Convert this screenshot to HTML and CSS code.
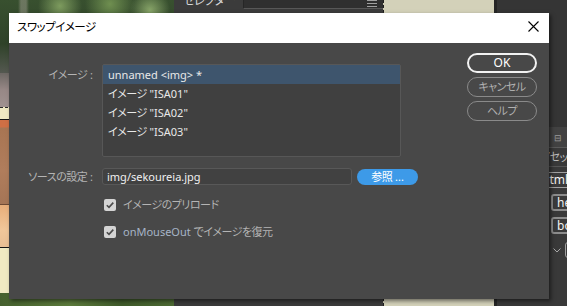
FILE: index.html
```html
<!DOCTYPE html>
<html lang="ja">
<head>
<meta charset="utf-8">
<title>スワップイメージ</title>
<link rel="stylesheet" href="styles.css">
</head>
<body>
<div class="desktop">
  <div class="preview">
    <div class="band foliage"></div>
    <div class="band haze"></div>
    <div class="band cream-top"></div>
    <div class="band rust"></div>
    <div class="band peach"></div>
    <div class="band cream-bottom"></div>
    <div class="band grass"></div>
  </div>
  <div class="mid">
    <div class="mid-head">
      <div class="mid-title ja">セレクター</div>
      <div class="mid-search">
        <svg class="menu-icon" width="10" height="7" viewBox="0 0 10 7"><path d="M0 0.5H10M0 3.5H10M0 6.5H10" stroke="#a0a0a0" stroke-width="1"/></svg>
      </div>
    </div>
  </div>
  <div class="canvas"></div>
  <div class="split"></div>
  <div class="side">
    <div class="side-top"></div>
    <div class="side-bar"><span class="side-glyph">⊟</span></div>
    <div class="side-tabs"><span class="ja">アセット</span></div>
    <div class="tree">
      <div class="tag tag-root">html</div>
      <div class="tag tag-child">head</div>
      <div class="tag tag-child">body</div>
      <div class="tree-row">
        <svg width="8" height="5" viewBox="0 0 8 5"><path d="M0.5 0.5L4 4L7.5 0.5" fill="none" stroke="#a8a8a8" stroke-width="1"/></svg>
        <span class="tag tag-mini">div</span>
      </div>
    </div>
  </div>
</div>

<div class="dialog">
  <div class="titlebar">
    <span class="title ja">スワップイメージ</span>
    <svg class="close" width="11" height="11" viewBox="0 0 11 11"><path d="M0.5 0.5L10.5 10.5M10.5 0.5L0.5 10.5" stroke="#000" stroke-width="1.1"/></svg>
  </div>
  <div class="dialog-body">
    <div class="form">
      <div class="field-row">
        <div class="label label-list"><span class="ja">イメージ</span> :</div>
        <div class="list">
          <div class="list-item selected">unnamed &lt;img&gt; *</div>
          <div class="list-item"><span class="ja">イメージ</span> "ISA01"</div>
          <div class="list-item"><span class="ja">イメージ</span> "ISA02"</div>
          <div class="list-item"><span class="ja">イメージ</span> "ISA03"</div>
        </div>
      </div>
      <div class="field-row source-row">
        <div class="label"><span class="ja">ソースの設定</span> :</div>
        <div class="input">img/sekoureia.jpg</div>
        <div class="browse"><span class="ja">参照</span> ...</div>
      </div>
      <div class="check-row first">
        <span class="checkbox"><svg width="12" height="12" viewBox="0 0 12 12"><path d="M2.8 6.2L5 8.4L9.3 3.6" fill="none" stroke="#4a4a4a" stroke-width="1.6"/></svg></span>
        <span class="check-label ja">イメージのプリロード</span>
      </div>
      <div class="check-row second">
        <span class="checkbox"><svg width="12" height="12" viewBox="0 0 12 12"><path d="M2.8 6.2L5 8.4L9.3 3.6" fill="none" stroke="#4a4a4a" stroke-width="1.6"/></svg></span>
        <span class="check-label"><span class="event">onMouseOut</span> <span class="ja">でイメージを復元</span></span>
      </div>
    </div>
    <div class="buttons">
      <div class="btn primary">OK</div>
      <div class="btn"><span class="ja">キャンセル</span></div>
      <div class="btn"><span class="ja">ヘルプ</span></div>
    </div>
  </div>
</div>
</body>
</html>
```
FILE: styles.css
```css
* { box-sizing: border-box; }
html, body { margin: 0; padding: 0; }
body {
  width: 567px;
  height: 306px;
  overflow: hidden;
  position: relative;
  background: #3a3a3a;
  font-family: "Noto Sans", "Noto Sans CJK JP", sans-serif;
  font-feature-settings: "palt";
  font-size: 11px;
}
.ja { letter-spacing: -0.5px; }

/* background application */
.desktop { display: flex; height: 306px; }
.preview { flex: none; width: 174px; display: flex; flex-direction: column; }
.band { flex: none; }
.foliage {
  height: 73px;
  background:
    linear-gradient(90deg, transparent 18px, rgba(150,150,135,0.55) 21px, rgba(150,150,135,0.55) 26px, transparent 29px),
    radial-gradient(circle at 60px 6px, #7d9b5e 0, transparent 22px),
    radial-gradient(circle at 110px 4px, #6f8f50 0, transparent 25px),
    radial-gradient(circle at 150px 10px, #87a468 0, transparent 20px),
    linear-gradient(#38502f, #2f4229 60%, #545850);
}
.haze { height: 34px; background: linear-gradient(#6d6864, #978886 50%, #a09290); }
.cream-top { height: 13px; background: #efe9c2; border-top: 1px dashed #2a2a2a; border-bottom: 1px solid #151515; }
.rust { height: 85px; background: linear-gradient(#cf6f45 0, #cf6f45 7px, #a87553 8px, #b07d5c 60%, #a57556); border-bottom: 1px solid #6e4a35; }
.peach { height: 43px; background: linear-gradient(#e8ae7a, #f1c79a 60%, #e9bf94); border-bottom: 1px solid #151515; }
.cream-bottom { height: 45px; background: #f0eac2; }
.grass { flex: 1; background: linear-gradient(90deg, #45602e, #5c7a3c 40%, #3f5a2a 70%, #4d6a34); }

.mid { flex: none; width: 209px; background: #3b3b3b; }
.mid-head { display: flex; height: 9px; }
.mid-title {
  width: 69px;
  padding-left: 9px;
  color: #d6d6d6;
  font-size: 12px;
  line-height: 14px;
  margin-top: -6px;
  white-space: nowrap;
  overflow: hidden;
}
.mid-search {
  flex: 1;
  background: #2f2f2f;
  border-left: 1px solid #262626;
  border-bottom: 1px solid #575757;
  display: flex;
  justify-content: flex-end;
  padding-right: 6px;
}
.menu-icon { display: block; }

.canvas { flex: none; width: 111px; background: #d3d1b9; border-left: 1px dashed #1e1e1e; }
.split { flex: none; width: 3px; background: #262626; }
.side { flex: 1; min-width: 0; overflow: hidden; background: #393939; display: flex; flex-direction: column; }
.side-top { flex: none; height: 127px; background: #353535; }
.side-bar { flex: none; height: 21px; background: #424242; border-bottom: 1px solid #5a5a5a; padding-left: 57px; color: #9a9a9a; font-size: 9px; line-height: 21px; }
.side-tabs { flex: none; height: 19px; border-bottom: 1px solid #555; padding-left: 43px; color: #bdbdbd; font-size: 11px; line-height: 17px; white-space: nowrap; overflow: hidden; }
.tree { display: flex; flex-direction: column; align-items: flex-start; padding-top: 5px; gap: 6px; }
.tag {
  flex: none;
  border: 1px solid #a0a0a0;
  border-radius: 3px;
  color: #f2f2f2;
  font-size: 12px;
  line-height: 14px;
  padding: 0 4px;
  background: #3a3a3a;
  white-space: nowrap;
}
.tag-root { margin-left: 40px; }
.tag-child { margin-left: 54px; border-width: 2px; border-color: #8c8c8c; line-height: 13px; }
.tree-row { display: flex; align-items: center; gap: 4px; margin-left: 56px; margin-top: 2px; }
.tag-mini { height: 16px; }

/* dialog */
.dialog {
  position: absolute;
  left: 9px;
  top: 13px;
  width: 540px;
  height: 286px;
  box-shadow: 2px 2px 4px rgba(0,0,0,0.5);
  display: flex;
  flex-direction: column;
}
.titlebar {
  flex: none;
  height: 30px;
  background: #ffffff;
  display: flex;
  align-items: center;
  justify-content: space-between;
  padding: 0 10px 0 8px;
}
.title { color: #000; font-size: 11.5px; line-height: 14px; margin-top: -3px; }
.close { display: block; margin-top: -4px; }

.dialog-body {
  flex: 1;
  background: #484848;
  display: flex;
  padding-right: 12px;
}
.form { width: 420px; padding-top: 21px; }
.field-row { display: flex; align-items: flex-start; }
.label {
  width: 84px;
  margin-right: 9px;
  text-align: right;
  color: #b4b4b4;
  line-height: 19px;
  white-space: nowrap;
}
.label-list { margin-top: 1px; }
.list {
  width: 299px;
  height: 93px;
  background: #404040;
  border: 1px solid #575757;
  border-radius: 2px;
}
.list-item {
  height: 19px;
  line-height: 19px;
  padding-left: 5px;
  color: #e8e8e8;
  white-space: nowrap;
}
.list-item.selected { background: #3e556d; }

.source-row { margin-top: 10px; align-items: center; }
.input {
  width: 250px;
  height: 17px;
  background: #414141;
  border: 1px solid #585858;
  border-radius: 3px;
  color: #f0f0f0;
  line-height: 15px;
  padding-left: 4px;
}
.browse {
  width: 61px;
  height: 16px;
  margin-left: 5px;
  margin-top: 1px;
  border-radius: 8px;
  background: #3d9ae8;
  color: #ffffff;
  line-height: 16px;
  text-align: center;
}

.check-row { display: flex; align-items: center; height: 12px; padding-left: 95px; }
.check-row.first { margin-top: 13px; }
.check-row.second { margin-top: 15px; }
.checkbox {
  width: 12px;
  height: 12px;
  border-radius: 2px;
  background: #d4d4d4;
  display: block;
  flex: none;
}
.checkbox svg { display: block; }
.check-label {
  margin-left: 7px;
  color: #b4b4b4;
  line-height: 12px;
  white-space: nowrap;
}
.event { color: #a6b4c6; }

.buttons {
  margin-left: auto;
  padding-top: 10px;
  display: flex;
  flex-direction: column;
  gap: 4px;
}
.btn {
  width: 70px;
  height: 20px;
  border: 1.5px solid #8a8a8a;
  border-radius: 10px;
  color: #b0b0b0;
  line-height: 17px;
  text-align: center;
}
.btn.primary { border: 2px solid #f2f2f2; color: #ffffff; line-height: 16px; font-size: 12px; }
```
